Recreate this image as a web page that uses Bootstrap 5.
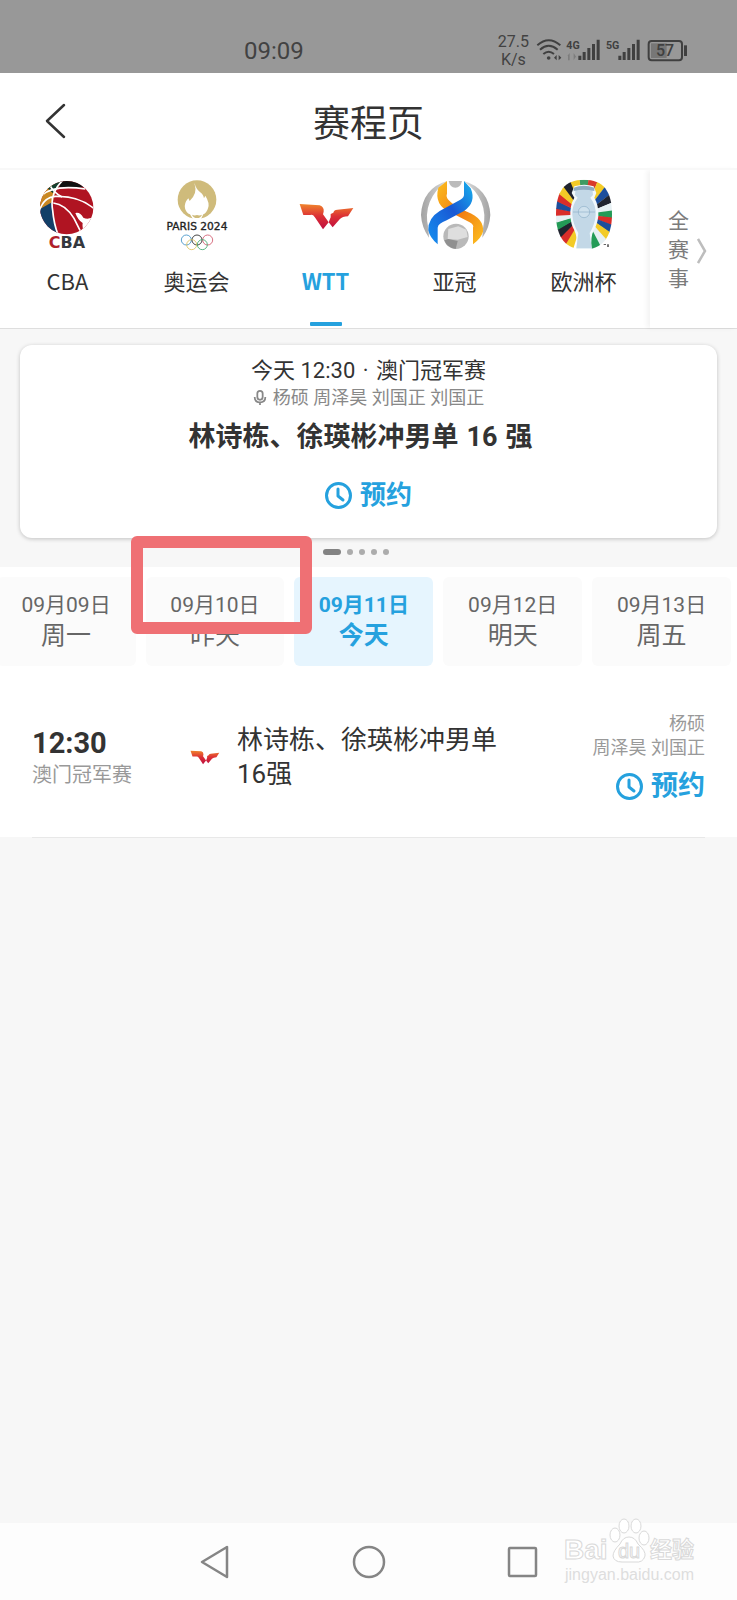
<!DOCTYPE html>
<html lang="zh-CN">
<head>
<meta charset="utf-8">
<meta name="viewport" content="width=device-width, initial-scale=1">
<title>赛程页</title>
<link href="https://cdn.jsdelivr.net/npm/bootstrap@5.3.0/dist/css/bootstrap.min.css" rel="stylesheet">
<style>
  :root { --sky: #25a1de; --ink: #333; --soft: #f7f7f7; }
  body { font-family: Roboto, "Noto Sans CJK SC", sans-serif; color: var(--ink); background: var(--soft); }
  svg { display: block; flex: none; }
  button { border: 0; background: none; padding: 0; color: inherit; }
  a { color: inherit; text-decoration: none; }

  .status-bar { background: #989898; height: 73px; padding: 26px 47px 0 33.1%; color: #424242; }
  .clock-text { font-size: 24px; line-height: 50px; }
  .net-speed { font-size: 16px; line-height: 18px; padding-top: 7px; }
  .status-icons { margin: 10px 0 0 5px; }

  .page-head { height: 97px; padding-top: 8px; border-bottom: 2px solid #f8f8f8; }
  .page-head h1 { font-size: 37px; line-height: 48px; font-weight: 400; }
  .back-btn { left: 44px; top: 30px; }

  .league-bar { height: 159px; border-bottom: 1px solid #dedede; }
  .league-list { padding: 0 2px 0 3px; }
  .league-tab { flex: 1 1 0; font: 22px/30px "Noto Sans CJK SC", sans-serif; padding-top: 9px; }
  .league-tab .tab-name { margin-top: 14px; }
  .league-tab.active { color: var(--sky); font-weight: 700; }
  .league-tab.active::after { content: ""; width: 32px; height: 4px; margin-top: 27px; background: var(--sky); border-radius: 1px; }
  .all-leagues { width: 87px; padding: 3px 0 0 18px; gap: 8px; color: #7b7b7b; box-shadow: -3px 0 5px #0000000d; }
  .all-leagues span { width: 21px; font-size: 21px; line-height: 29px; }

  .hero-zone { padding: 16px 20px 12px; }
  .hero-card { border: 0; border-radius: 12px; padding: 12px 0 29px; box-shadow: 0 1px 4px #00000038; }
  .hero-when { font-size: 22px; line-height: 28px; }
  .hero-when span { margin: 0 2px; }
  .hero-cast { font-size: 18px; line-height: 26px; color: #888; gap: 6px; }
  .hero-card h2 { font-size: 27px; line-height: 52px; font-weight: 700; }
  .book-btn { color: var(--sky); font-weight: 700; font-size: 26px; line-height: 28px; gap: 8px; margin-top: 18px; }
  .pager { gap: 6px; padding: 11px 26px 0 0; }
  .pager i { width: 6px; height: 6px; border-radius: 3px; background: #acacac; }
  .pager i.on { width: 18px; background: #838383; }

  .date-strip { padding: 10px 6px 0 0; gap: 10px; overflow-x: clip; }
  .date-chip { flex: 0 0 19%; padding: 13px 0 14px; border-radius: 6px; background: #fbfbfb; color: #666; }
  .date-chip .day { font-size: 21px; line-height: 30px; }
  .date-chip .week { font-size: 25px; line-height: 32px; }
  .date-chip.active { background: #e6f5fe; color: var(--sky); font-weight: 700; }
  .marker { left: -15px; right: -28px; top: -41px; bottom: 32px; border: 12px solid #ef7074; border-radius: 6px; pointer-events: none; }

  .match-row { padding: 46px 32px 35px; }
  .match-row .when { width: 158px; }
  .match-row .when strong { font-size: 29px; line-height: 32px; }
  .match-row .when div { font-size: 20px; line-height: 32px; color: #999; }
  .match-title { flex: 0 0 272px; font-size: 26px; line-height: 34px; margin-left: 17px; }
  .match-cast { font-size: 18px; line-height: 24px; color: #999; }
  .match-cast .book-btn { margin-top: 10px; line-height: 32px; font-size: 27px; }
  .row-rule { margin: 0 32px; border: 0; border-top: 1px solid #e8e8e8; opacity: 1; }

  .sys-nav { height: 77px; background: #fdfdfd; gap: 120px; }
  .watermark { right: 36px; bottom: 14px; }
</style>
</head>
<body class="d-flex flex-column min-vh-100">

<header class="bg-white">
  <div class="status-bar d-flex">
    <div class="clock-text">09:09</div>
    <div class="net-speed ms-auto text-center">27.5<br>K/s</div>
    <svg class="status-icons" width="156" height="28" viewBox="162 48 468 84" fill="#404040" aria-hidden="true">
      <g fill="none" stroke="#404040" stroke-width="6">
        <path d="M172 76Q206 46 241 76M180 89Q206 66 233 89M190 102Q206 88 222 102"/>
        <rect x="506" y="63" width="100" height="58" rx="9"/>
      </g>
      <circle cx="206" cy="114" r="5.500"/>
      <path d="M222 113l8-8v16zM244 113l-8-8v16z"/>
      <path opacity=".3" d="M262 108l7-9v22h-5v-13zM281 121v-22l8 13h-3z"/>
      <path d="M295 107h9v13h-9zM308 96h9v24h-9zM322 84h9v36h-9zM336 72h9v48h-9zM350 59h9v61h-9z"/>
      <path d="M415 107h9v13h-9zM428 96h9v24h-9zM442 84h9v36h-9zM456 72h9v48h-9zM470 59h9v61h-9z"/>
      <path d="M612 76h9v32h-9z"/>
      <path fill="#777" d="M513 70h47v44h-47z"/>
      <g font-family="Roboto, sans-serif" font-weight="700">
        <text x="259" y="87" font-size="32">4G</text>
        <text x="378" y="87" font-size="32">5G</text>
        <text x="528" y="109" font-size="48" font-weight="500">57</text>
      </g>
    </svg>
  </div>
  <div class="page-head position-relative d-flex align-items-center justify-content-center">
    <button class="back-btn position-absolute" type="button" aria-label="返回">
      <svg width="22" height="36" viewBox="0 0 22 36"><path d="M20 2L3 18l17 16" fill="none" stroke="#333" stroke-width="2.500" stroke-linecap="round" stroke-linejoin="round"/></svg>
    </button>
    <h1 class="m-0">赛程页</h1>
  </div>

  <nav class="league-bar d-flex">
    <div class="league-list d-flex flex-grow-1">
      <a href="#cba" class="league-tab d-flex flex-column align-items-center">
        <svg width="72" height="72" viewBox="96 42 216 216" aria-hidden="true">
          <clipPath id="ball"><circle cx="200" cy="128" r="80"/></clipPath>
          <g clip-path="url(#ball)">
            <path fill="#b01422" d="M110 40h180v170H110z"/>
            <path fill="#c98721" d="M110 60h60l-12 54-48 26z"/>
            <path fill="#14402f" d="M134 62l52-22-12 28-16 16z"/>
            <path fill="#111" d="M184 40h62l14 26-34 2-48-2z"/>
            <path fill="#133f68" d="M110 138l46-26 2 40 16 62h-64z"/>
            <g fill="none" stroke="#fff" stroke-width="5">
              <path d="M190 44Q148 84 158 136 162 180 176 214M116 146Q126 98 166 94 240 92 286 134"/>
              <path d="M124 92Q160 58 256 72M160 114Q196 118 222 160L242 200M148 58Q160 82 186 96"/>
            </g>
            <path fill="#fff" d="M226 144q14-4 24 14 16 8 38-6v50h-36q-6-12-4-28-14-8-22-30z"/>
          </g>
          <text x="201" y="250" text-anchor="middle" font-family="DejaVu Sans, sans-serif" font-weight="700" font-size="48" fill="#34383e"><tspan fill="#b01f2b">C</tspan>BA</text>
        </svg>
        <span class="tab-name">CBA</span>
      </a>
      <a href="#olympics" class="league-tab d-flex flex-column align-items-center">
        <svg width="72" height="72" viewBox="483 42 216 216" aria-hidden="true">
          <circle cx="591" cy="104" r="58" fill="#cfbb7b"/>
          <path fill="#fff" d="M584 54q2 18 22 32 6 8 6 14l4-8q14 22 8 38-4 14-14 18l-8 16h-22l-10-16q-12-4-15-18-3-16 10-30l4 8q24-22 15-50z"/>
          <path fill="#cfbb7b" d="M576 149q7 4 15 1 8 3 15-1-4 10-15 10t-15-10z"/>
          <text x="591" y="194" text-anchor="middle" font-family="DejaVu Sans, sans-serif" font-size="32" stroke="#222" stroke-width="1" fill="#222">PARIS 2024</text>
          <g fill="none" stroke-width="2.500">
            <circle cx="559" cy="225" r="15" stroke="#3b8fc4"/><circle cx="591" cy="225" r="15" stroke="#222"/><circle cx="623" cy="225" r="15" stroke="#d0556a"/>
            <circle cx="575" cy="239" r="15" stroke="#dcc35a"/><circle cx="607" cy="239" r="15" stroke="#3aa76a"/>
          </g>
        </svg>
        <span class="tab-name">奥运会</span>
      </a>
      <a href="#wtt" class="league-tab active d-flex flex-column align-items-center" aria-current="page">
        <svg width="72" height="72" viewBox="88 42 216 216" aria-hidden="true">
          <linearGradient id="flame" gradientUnits="userSpaceOnUse" x1="0" y1="117" x2="0" y2="190"><stop offset="0" stop-color="#f0852c"/><stop offset=".5" stop-color="#dc3035"/><stop offset="1" stop-color="#c0103f"/></linearGradient>
          <g id="wings" fill="url(#flame)">
            <path d="M117 117l60 4q14 5 12 19l-2 8 17 24-17 21-25-37q-5-8-13-6l-21 0z"/>
            <path d="M278 129l-48 5q-10 0-12 9l-8 4v10l-6 15 12 15 21-24q8-9 25-9z"/>
          </g>
        </svg>
        <span class="tab-name">WTT</span>
      </a>
      <a href="#acl" class="league-tab d-flex flex-column align-items-center">
        <svg width="72" height="72" viewBox="474 42 216 216" aria-hidden="true">
          <linearGradient id="blue" x1="1" y1="0" x2="0" y2="1"><stop offset="0" stop-color="#18b4ee"/><stop offset=".45" stop-color="#1958d4"/><stop offset="1" stop-color="#1590f0"/></linearGradient>
          <linearGradient id="gold" x1="0" y1="0" x2="1" y2="1"><stop offset="0" stop-color="#fcbf1e"/><stop offset=".5" stop-color="#f17c12"/><stop offset="1" stop-color="#fdc220"/></linearGradient>
          <linearGradient id="steel"><stop offset="0" stop-color="#a2a2a2"/><stop offset=".5" stop-color="#f0f0f0"/><stop offset="1" stop-color="#a2a2a2"/></linearGradient>
          <path fill="url(#steel)" d="M558 48q-74 22-78 102 2 38 24 68l-2-28q-20-86 56-142zM608 48q76 22 80 102-2 38-24 68l2-28q20-86-58-142z"/>
          <path fill="#bbb" d="M563 48h40q-4 20-20 20t-20-20z"/>
          <path fill="url(#gold)" d="M532 68l26-20v38q-4 8 4 18 16 18 56 36 52 20 48 60-6 20-30 38v-50q4-8-10-16l-58-30q-50-22-36-74z"/>
          <path fill="url(#blue)" d="M609 48l20 22q18 42-20 68l-52 28q-26 10-27 22v50q-24-20-28-42-2-36 34-58l62-34q12-6 11-16z"/>
          <circle cx="585" cy="214" r="38" fill="#b9b9b9"/>
          <path fill="#dedede" d="M562 192l30-8 24 10 4 22-30 8-30-2z"/><path fill="#909090" d="M550 226l12-4 28 6-6 24q-26-4-34-26z"/>
        </svg>
        <span class="tab-name">亚冠</span>
      </a>
      <a href="#euro" class="league-tab d-flex flex-column align-items-center">
        <svg width="72" height="72" viewBox="141 42 216 216" aria-hidden="true">
          <clipPath id="badge"><path d="M249 44c58 0 84 34 84 104s-30 106-84 106-84-36-84-106 26-104 84-104z"/></clipPath>
          <defs><path id="ray" d="M249 148L230 8h38z"/></defs>
          <g clip-path="url(#badge)">
            <use href="#ray" fill="#3f9b62"/>
            <use href="#ray" fill="#d93a2b" transform="rotate(15 249 148)"/>
            <use href="#ray" fill="#f3cb27" transform="rotate(30 249 148)"/>
            <use href="#ray" fill="#1c4e9c" transform="rotate(45 249 148)"/>
            <use href="#ray" fill="#20242f" transform="rotate(60 249 148)"/>
            <use href="#ray" fill="#e6f0f3" transform="rotate(75 249 148)"/>
            <use href="#ray" fill="#239b57" transform="rotate(90 249 148)"/>
            <use href="#ray" fill="#d92e2a" transform="rotate(104 249 148)"/>
            <use href="#ray" fill="#1c4e9c" transform="rotate(118 249 148)"/>
            <use href="#ray" fill="#f3cb27" transform="rotate(132 249 148)"/>
            <use href="#ray" fill="#e6f0f3" transform="rotate(146 249 148)"/>
            <use href="#ray" fill="#239b57" transform="rotate(160 249 148)"/>
            <use href="#ray" fill="#f3cb27" transform="rotate(205 249 148)"/>
            <use href="#ray" fill="#d92e2a" transform="rotate(219 249 148)"/>
            <use href="#ray" fill="#20242f" transform="rotate(233 249 148)"/>
            <use href="#ray" fill="#239b57" transform="rotate(247 249 148)"/>
            <use href="#ray" fill="#e6f0f3" transform="rotate(261 249 148)"/>
            <use href="#ray" fill="#d92e2a" transform="rotate(275 249 148)"/>
            <use href="#ray" fill="#1c4e9c" transform="rotate(289 249 148)"/>
            <use href="#ray" fill="#d92e2a" transform="rotate(303 249 148)"/>
            <use href="#ray" fill="#f3cb27" transform="rotate(317 249 148)"/>
            <use href="#ray" fill="#20242f" transform="rotate(331 249 148)"/>
            <use href="#ray" fill="#f3cb27" transform="rotate(345 249 148)"/>
          </g>
          <path fill="#f1f8fc" d="M220 64q30-10 58 0l8 20-6 14q14 24 12 56-4 28-14 42-10 20-6 56h-46q4-36-6-56-10-16-12-42-2-32 12-56l-8-14z"/>
          <path fill="#c3d8e7" d="M224 70q24-8 50 0l2 20-8 8q18 24 16 52t-18 54l6 46h-46l6-46q-16-26-18-54t16-52l-8-8z"/>
          <circle cx="249" cy="141" r="17" fill="#cfe1ed" stroke="#8fb0c8" stroke-width="2"/>
          <path d="M216 141h66" stroke="#8fb0c8" stroke-width="2"/>
          <path fill="#8eabc0" d="M218 68q30-12 62 0v10q-32-8-62 0z"/>
          <path fill="#333" d="M308 238h7v2h-7zM319 238h4v8h-4z"/>
        </svg>
        <span class="tab-name">欧洲杯</span>
      </a>
    </div>
    <a href="#all" class="all-leagues d-flex align-items-center">
      <span>全赛事</span>
      <svg width="10" height="26" viewBox="0 0 10 26"><path d="M1 1l7 12-7 12" fill="none" stroke="#bdbdbd" stroke-width="2.500"/></svg>
    </a>
  </nav>
</header>

<main class="flex-grow-1">
  <section class="hero-zone">
    <article class="card hero-card text-center">
      <div class="hero-when">今天 12:30 <span>·</span> 澳门冠军赛</div>
      <div class="hero-cast d-flex justify-content-center align-items-center">
        <svg width="14" height="16" viewBox="0 0 14 18" fill="none" stroke="#888" stroke-width="2"><rect x="4" y="1" width="6" height="10" rx="3"/><path d="M1 8q0 6 6 6t6-6M7 14v3"/></svg>
        杨硕 周泽昊 刘国正 刘国正
      </div>
      <h2 class="m-0 pe-3">林诗栋、徐瑛彬冲男单<span class="mx-2">16</span>强</h2>
      <button type="button" class="book-btn d-flex justify-content-center align-items-center">
        <svg width="27" height="27" viewBox="0 0 27 27" fill="none" stroke="currentColor" stroke-width="3"><circle cx="13.500" cy="13.500" r="12"/><path d="M13 7v7l5 4" stroke-linecap="round" stroke-linejoin="round"/></svg>
        预约
      </button>
    </article>
    <div class="pager d-flex justify-content-center"><i class="on"></i><i></i><i></i><i></i><i></i></div>
  </section>

  <section class="bg-white">
    <div class="date-strip d-flex justify-content-end">
      <button type="button" class="date-chip"><div class="day">09月09日</div><div class="week">周一</div></button>
      <button type="button" class="date-chip position-relative"><div class="day">09月10日</div><div class="week">昨天</div><span class="marker position-absolute"></span></button>
      <button type="button" class="date-chip active"><div class="day">09月11日</div><div class="week">今天</div></button>
      <button type="button" class="date-chip"><div class="day">09月12日</div><div class="week">明天</div></button>
      <button type="button" class="date-chip"><div class="day">09月13日</div><div class="week">周五</div></button>
    </div>
    <article class="match-row d-flex align-items-center">
      <div class="when mt-1"><strong class="d-block">12:30</strong><div>澳门冠军赛</div></div>
      <svg width="30" height="17" viewBox="114 108 168 95" aria-hidden="true"><use href="#wings"/></svg>
      <div class="match-title">林诗栋、徐瑛彬冲男单16强</div>
      <div class="match-cast ms-auto text-end text-nowrap">杨硕<br>周泽昊 刘国正
        <button type="button" class="book-btn d-flex align-items-center ms-auto">
          <svg width="27" height="27" viewBox="0 0 27 27" fill="none" stroke="currentColor" stroke-width="3"><circle cx="13.500" cy="13.500" r="12"/><path d="M13 7v7l5 4" stroke-linecap="round" stroke-linejoin="round"/></svg>
          预约
        </button>
      </div>
    </article>
  </section>
  <hr class="row-rule">
</main>

<footer class="sys-nav position-relative d-flex justify-content-center align-items-center">
  <button type="button" aria-label="后退"><svg width="34" height="34" viewBox="0 0 34 34" fill="none" stroke="#858585" stroke-width="2.500" stroke-linejoin="round"><path d="M4 17L29 2v30z"/></svg></button>
  <button type="button" aria-label="主页"><svg width="34" height="34" viewBox="0 0 34 34" fill="none" stroke="#858585" stroke-width="2.500"><circle cx="17" cy="17" r="15"/></svg></button>
  <button type="button" aria-label="最近任务"><svg width="34" height="34" viewBox="0 0 34 34" fill="none" stroke="#858585" stroke-width="2.500"><rect x="3" y="3" width="27" height="28" rx="1"/></svg></button>
  <div class="watermark position-absolute">
    <svg width="138" height="68" viewBox="0 0 138 68" fill="#fff" stroke="#d9d9d9" stroke-width="1">
      <g font-family="Liberation Sans, Noto Sans CJK SC, sans-serif" font-weight="700">
        <text x="1" y="41" font-size="28">Bai</text>
        <text x="87" y="39" font-size="22">经验</text>
        <text x="2" y="62" font-weight="400" font-size="16" fill="#dedede" stroke="none">jingyan.baidu.com</text>
      </g>
      <ellipse cx="52" cy="17" rx="5" ry="7"/><ellipse cx="61" cy="8" rx="5" ry="7"/><ellipse cx="73" cy="8" rx="5" ry="7"/><ellipse cx="81" cy="20" rx="5" ry="7"/>
      <path d="M66 19q6 0 9 7 8 7 7 12-2 7-10 6h-13q-8 0-9-6 0-5 7-12 3-7 9-7z"/>
      <text x="55" y="40" font-family="Liberation Sans, sans-serif" font-size="20">du</text>
    </svg>
  </div>
</footer>

<script src="https://cdn.jsdelivr.net/npm/bootstrap@5.3.0/dist/js/bootstrap.bundle.min.js"></script>
</body>
</html>
